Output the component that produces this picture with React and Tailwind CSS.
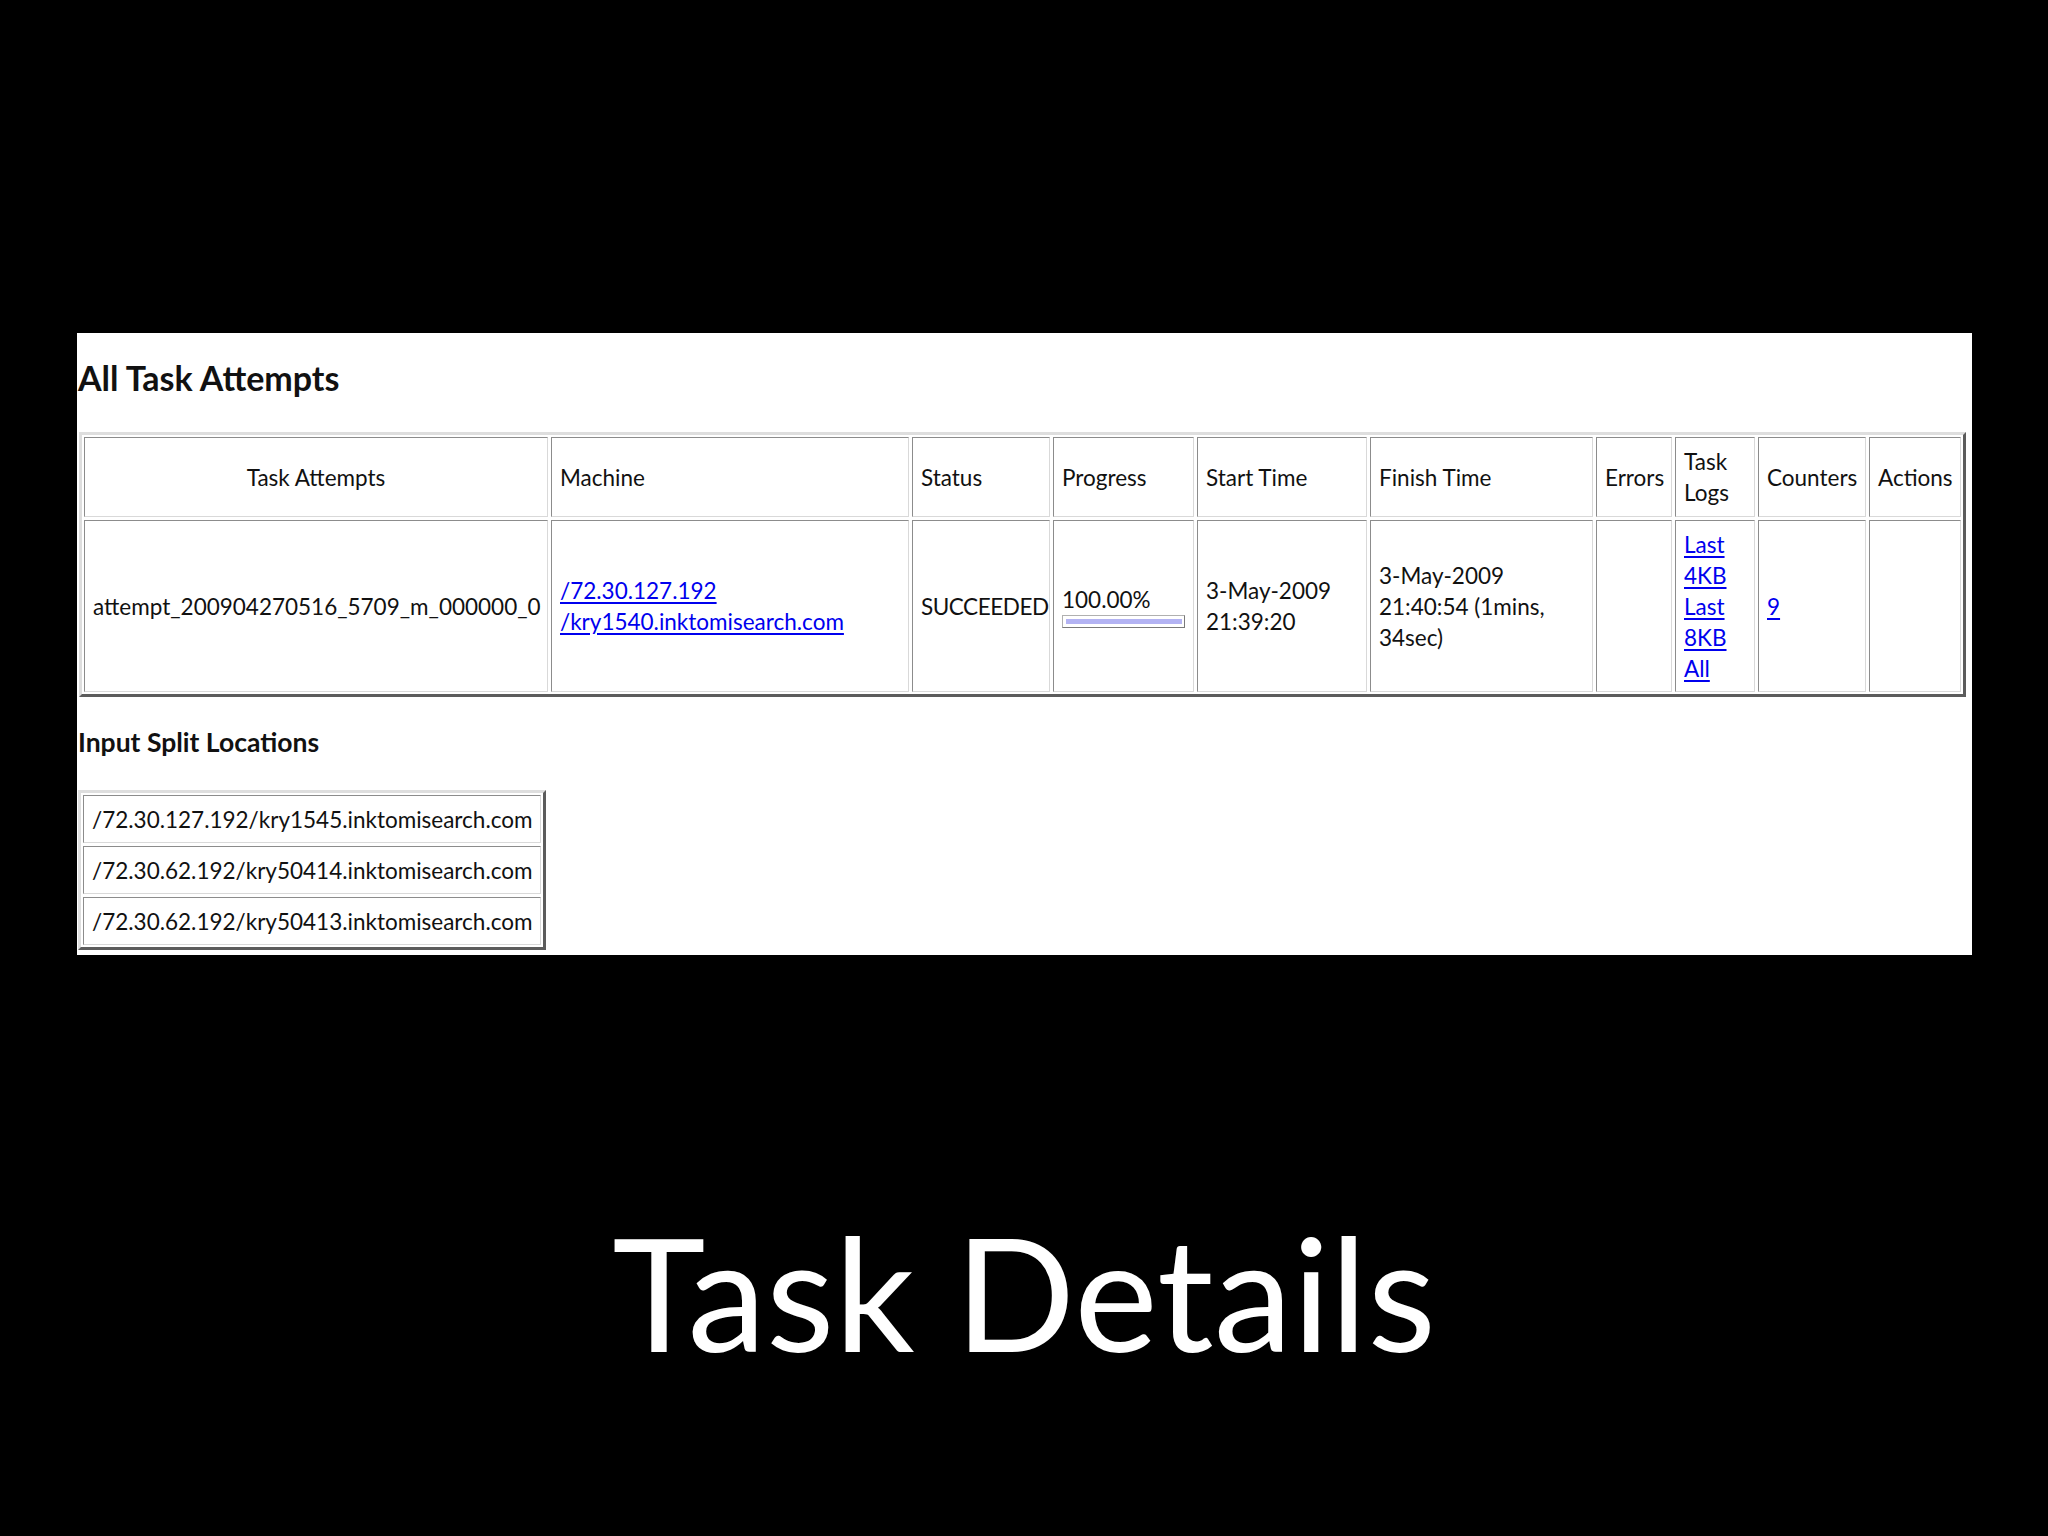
import React from 'react';

const cellBorder =
  'border border-t-[#8c8c8c] border-l-[#8c8c8c] border-b-[#d9d9d9] border-r-[#d9d9d9]';

const Cell = ({ children, className = '' }) => (
  <div className={`${cellBorder} px-2 flex flex-col justify-center ${className}`}>{children}</div>
);

const Link = ({ children }) => <span className="text-[#0000ee] underline underline-offset-[3px]">{children}</span>;

const splitLocations = [
  '/72.30.127.192/kry1545.inktomisearch.com',
  '/72.30.62.192/kry50414.inktomisearch.com',
  '/72.30.62.192/kry50413.inktomisearch.com',
];

const App = () => {
  return (
    <div className="min-h-[1536px] w-[2048px] bg-black pt-[333px] font-['Lato',sans-serif]">
      {/* Screenshot panel */}
      <div className="ml-[77px] w-[1895px] h-[622px] bg-white pl-[1px] pt-[24px] text-[#111] text-[22.5px] leading-[31px]">
        <h2 className="text-[34px] leading-[41px] font-bold">All Task Attempts</h2>

        {/* Task attempts table */}
        <div className="mt-[34px] ml-[1px] w-fit border-[3px] border-t-[#dedede] border-l-[#dedede] border-b-[#5c5c5c] border-r-[#5c5c5c] p-[2px]">
          <div className="grid grid-cols-[464px_358px_138px_141px_170px_223px_76px_80px_108px_92px] grid-rows-[80px_172px] gap-[3px]">
            <Cell className="items-center">Task Attempts</Cell>
            <Cell>Machine</Cell>
            <Cell>Status</Cell>
            <Cell>Progress</Cell>
            <Cell>Start Time</Cell>
            <Cell>Finish Time</Cell>
            <Cell>Errors</Cell>
            <Cell>
              <span>Task</span>
              <span>Logs</span>
            </Cell>
            <Cell>Counters</Cell>
            <Cell>Actions</Cell>

            <Cell className="whitespace-nowrap">attempt_200904270516_5709_m_000000_0</Cell>
            <Cell>
              <Link>/72.30.127.192</Link>
              <span>
                <Link>/kry1540.inktomisearch.com</Link>
              </span>
            </Cell>
            <Cell className="whitespace-nowrap tracking-[-0.02em]">SUCCEEDED</Cell>
            <Cell>
              <span>100.00%</span>
              <div className="w-[123px] h-[13px] border border-t-[#b0b0b0] border-l-[#b0b0b0] border-b-[#7a7a7a] border-r-[#7a7a7a] pl-[3px] pr-[2px] py-[3px]">
                <div className="h-full bg-[#b3b3f3]" />
              </div>
            </Cell>
            <Cell>
              <span>3-May-2009</span>
              <span>21:39:20</span>
            </Cell>
            <Cell>
              <span>3-May-2009</span>
              <span>21:40:54 (1mins,</span>
              <span>34sec)</span>
            </Cell>
            <Cell />
            <Cell className="items-start">
              <Link>Last</Link>
              <Link>4KB</Link>
              <Link>Last</Link>
              <Link>8KB</Link>
              <Link>All</Link>
            </Cell>
            <Cell className="items-start">
              <Link>9</Link>
            </Cell>
            <Cell />
          </div>
        </div>

        <h3 className="mt-[30px] text-[26.5px] leading-[31px] font-bold">Input Split Locations</h3>

        {/* Input split table */}
        <div className="mt-[32px] w-fit border-[3px] border-t-[#dedede] border-l-[#dedede] border-b-[#5c5c5c] border-r-[#5c5c5c] p-[2px]">
          <div className="flex flex-col gap-[3px]">
            {splitLocations.map((loc) => (
              <Cell key={loc} className="w-[458px] h-[48px] whitespace-nowrap">
                {loc}
              </Cell>
            ))}
          </div>
        </div>
      </div>

      {/* Slide title */}
      <div className="mt-[257px] text-center text-white text-[158px] leading-none">Task Details</div>
    </div>
  );
};

export default App;
